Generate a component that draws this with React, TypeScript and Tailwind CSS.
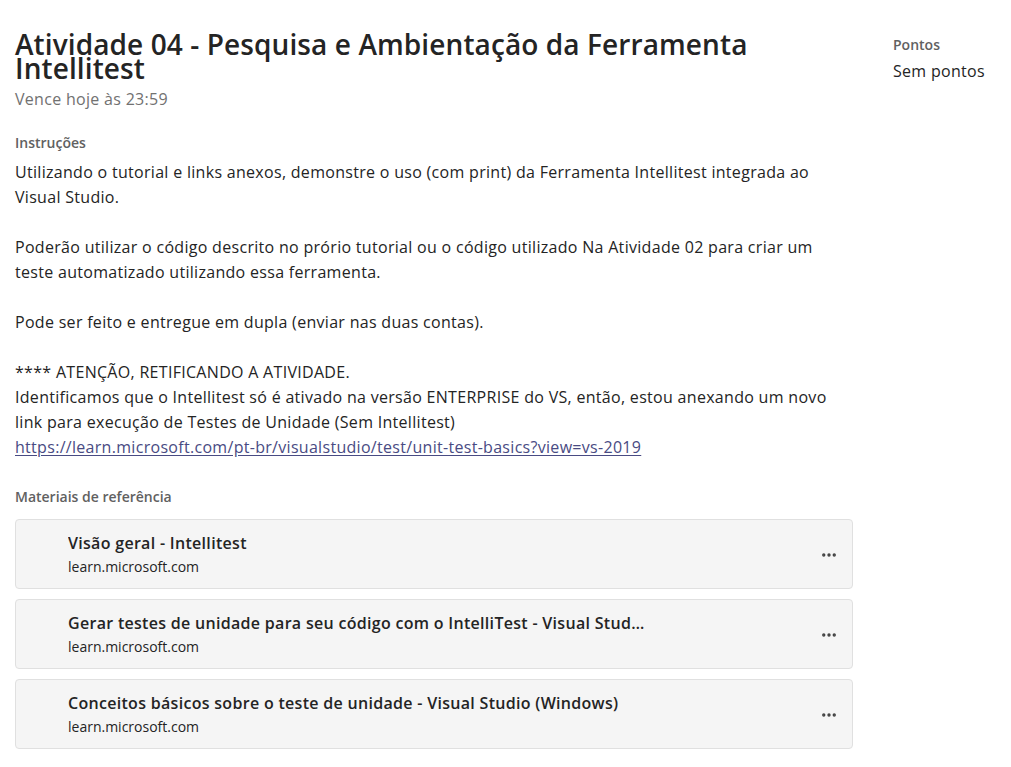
import { MoreHorizontal } from "lucide-react";

const refs = [
  { title: "Visão geral - Intellitest", host: "learn.microsoft.com" },
  {
    title: "Gerar testes de unidade para seu código com o IntelliTest - Visual Studio (Windows)",
    host: "learn.microsoft.com",
  },
  { title: "Conceitos básicos sobre o teste de unidade - Visual Studio (Windows)", host: "learn.microsoft.com" },
];

export default function App() {
  return (
    <div
      className="min-h-screen bg-white text-[#242424]"
      style={{ fontFamily: '"Segoe UI", "Open Sans", "Liberation Sans", sans-serif' }}
    >
      <div className="flex pl-[15px] pt-[30px]">
        <main className="w-[838px] shrink-0">
          <h1 className="pr-[60px] pt-[2px] text-[28px] font-semibold leading-[24px] tracking-[0.1px] text-[#242424]">
            Atividade 04 - Pesquisa e Ambientação da Ferramenta Intellitest
          </h1>
          <p className="mt-[7px] text-[16px] leading-[24px] tracking-[0.3px] text-[#717171]">Vence hoje às 23:59</p>

          <h2 className="mt-[22px] text-[14px] font-semibold leading-[20px] text-[#616161]">Instruções</h2>
          <div className="mt-[7px] text-[16px] leading-[25px] tracking-[0.3px]">
            <p>
              Utilizando o tutorial e links anexos, demonstre o uso (com print) da Ferramenta Intellitest integrada ao
              Visual Studio.
            </p>
            <p className="mt-[25px]">
              Poderão utilizar o código descrito no prório tutorial ou o código utilizado Na Atividade 02 para criar um
              teste automatizado utilizando essa ferramenta.
            </p>
            <p className="mt-[25px]">Pode ser feito e entregue em dupla (enviar nas duas contas).</p>
            <p className="mt-[25px]">**** ATENÇÃO, RETIFICANDO A ATIVIDADE.</p>
            <p>
              Identificamos que o Intellitest só é ativado na versão ENTERPRISE do VS, então, estou anexando um novo
              link para execução de Testes de Unidade (Sem Intellitest)
            </p>
            <a href="#" className="text-[#494b83] underline underline-offset-2">
              https://learn.microsoft.com/pt-br/visualstudio/test/unit-test-basics?view=vs-2019
            </a>
          </div>

          <h2 className="mt-[27px] text-[14px] font-semibold leading-[20px] text-[#616161]">
            Materiais de referência
          </h2>
          <div className="mt-[12px] flex flex-col gap-[10px]">
            {refs.map((r) => (
              <div
                key={r.title}
                className="flex h-[70px] items-center rounded-[4px] border border-[#e0e0e0] bg-[#f5f5f5] pl-[52px] pr-[14px]"
              >
                <div className="min-w-0 flex-1">
                  <div className="w-[580px] truncate text-[16px] font-semibold leading-[24px] tracking-[0.3px]">
                    {r.title}
                  </div>
                  <div className="mt-[2px] text-[14px] leading-[20px]">{r.host}</div>
                </div>
                <MoreHorizontal size={18} strokeWidth={2.5} className="mt-[2px] text-[#424242]" />
              </div>
            ))}
          </div>
        </main>

        <aside className="ml-[40px] pt-[5px]">
          <div className="text-[14px] font-semibold leading-[20px] text-[#616161]">Pontos</div>
          <div className="mt-[5px] text-[16px] leading-[22px] tracking-[0.3px]">Sem pontos</div>
        </aside>
      </div>
    </div>
  );
}
